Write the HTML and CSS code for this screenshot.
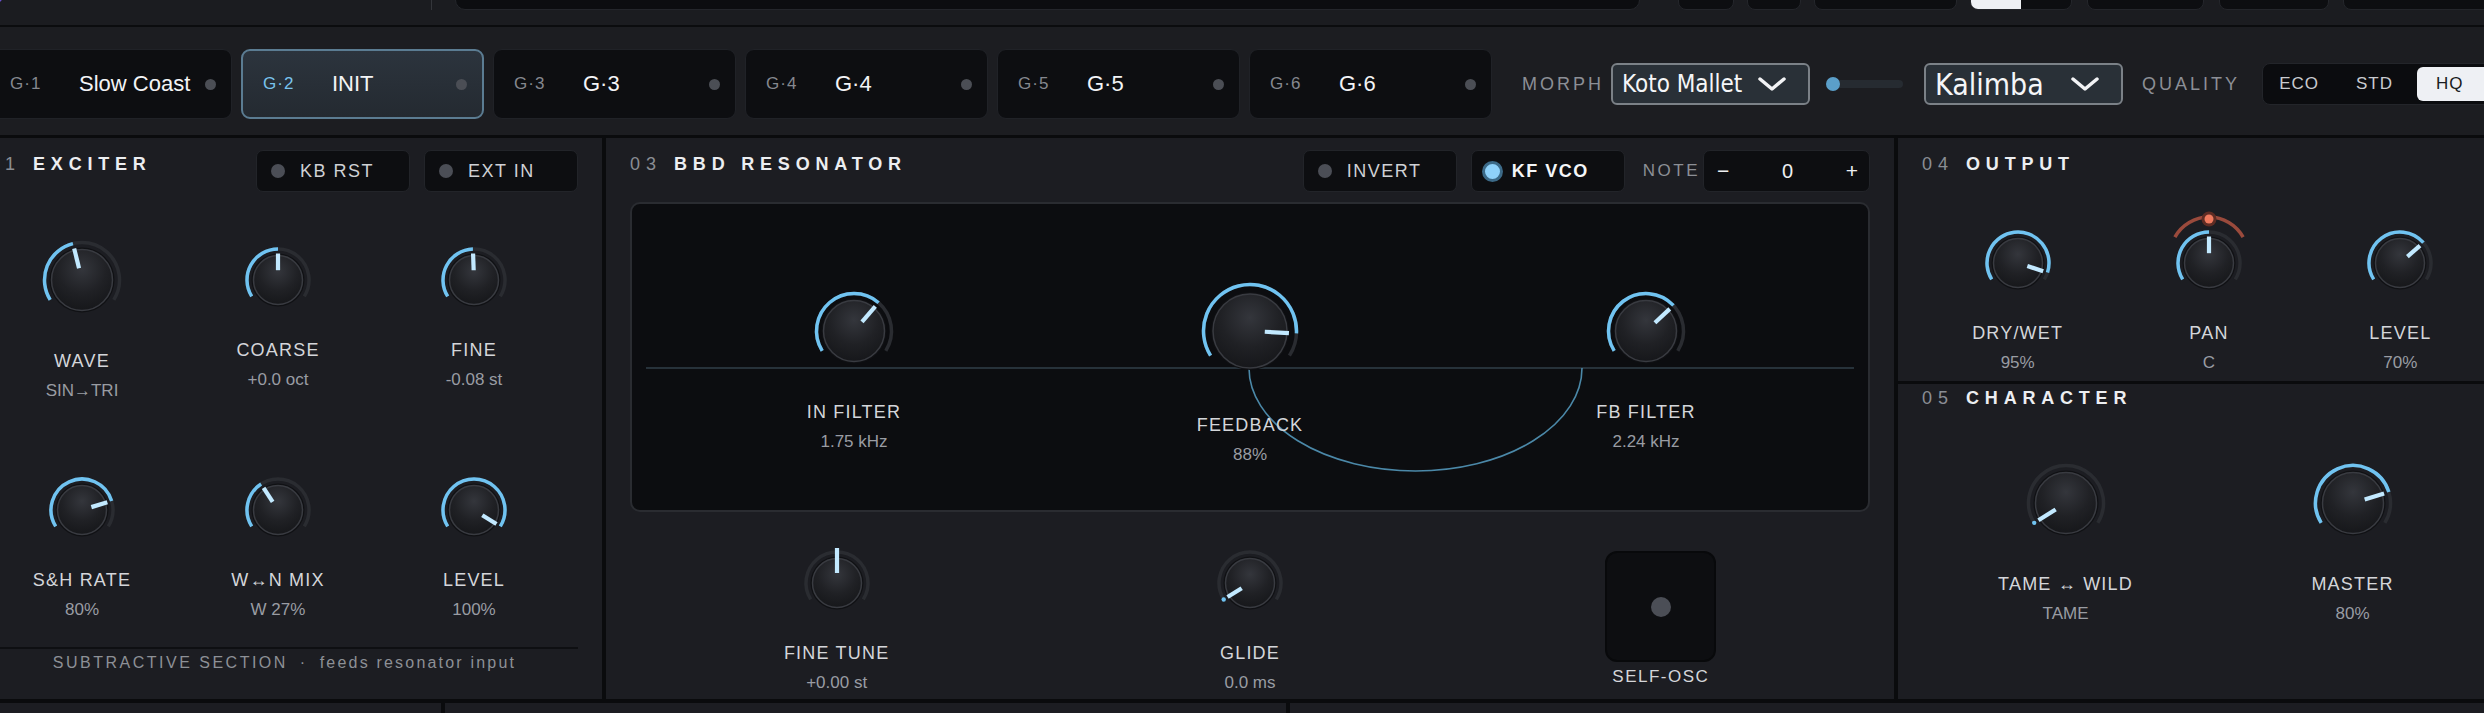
FILE: index.html
```html
<!DOCTYPE html>
<html lang="en">
<head>
<meta charset="utf-8">
<title>BBD Resonator Synth</title>
<link rel="stylesheet" href="styles.css">
</head>
<body>
<div class="app">
  <header class="topbar">
    <div class="tb-logo"></div>
    <div class="tb-sep"></div>
    <div class="tb-display"></div>
    <div class="tb-box w56 first"></div>
    <div class="tb-box w54"></div>
    <div class="tb-box w143"></div>
    <div class="tb-toggle"><span class="on"></span><span></span></div>
    <div class="tb-box w117"></div>
    <div class="tb-box w110"></div>
    <div class="tb-box w154"></div>
  </header>

  <section class="groups">
    <div class="tile"><span class="gid">G·1</span><span class="gname">Slow Coast</span><span class="gdot"></span></div>
    <div class="tile active"><span class="gid">G·2</span><span class="gname">INIT</span><span class="gdot"></span></div>
    <div class="tile"><span class="gid">G·3</span><span class="gname">G·3</span><span class="gdot"></span></div>
    <div class="tile"><span class="gid">G·4</span><span class="gname">G·4</span><span class="gdot"></span></div>
    <div class="tile"><span class="gid">G·5</span><span class="gname">G·5</span><span class="gdot"></span></div>
    <div class="tile"><span class="gid">G·6</span><span class="gname">G·6</span><span class="gdot"></span></div>
    <div class="morph">
      <span class="cap-lbl morph-lbl">MORPH</span>
      <div class="dd"><span class="dd-txt koto">Koto Mallet</span><svg class="chev" viewBox="0 0 28 14"><path d="M2 2 L14 12 L26 2"/></svg></div>
      <div class="slider"><span class="sl-dot"></span></div>
      <div class="dd"><span class="dd-txt kal">Kalimba</span><svg class="chev" viewBox="0 0 28 14"><path d="M2 2 L14 12 L26 2"/></svg></div>
      <span class="cap-lbl quality-lbl">QUALITY</span>
      <div class="seg"><span class="seg-b">ECO</span><span class="seg-b">STD</span><span class="seg-b on">HQ</span></div>
    </div>
  </section>

  <main class="panels">
    <section class="panel exciter">
      <div class="phead">
        <span class="pnum">01</span><span class="ptitle">EXCITER</span>
        <div class="pbtns">
          <div class="tbtn"><span class="led"></span>KB RST</div>
          <div class="tbtn"><span class="led"></span>EXT IN</div>
        </div>
      </div>
      <div class="kgrid3 exc-grid">
        <div class="cell"><svg class="knob md" data-a="-14"></svg><div class="klbl">WAVE</div><div class="kval">SIN→TRI</div></div>
        <div class="cell"><svg class="knob sm" data-a="0"></svg><div class="klbl">COARSE</div><div class="kval">+0.0 oct</div></div>
        <div class="cell"><svg class="knob sm" data-a="-2"></svg><div class="klbl">FINE</div><div class="kval">-0.08 st</div></div>
        <div class="cell"><svg class="knob sm" data-a="73"></svg><div class="klbl">S&amp;H RATE</div><div class="kval">80%</div></div>
        <div class="cell"><svg class="knob sm" data-a="-33"></svg><div class="klbl">W↔N MIX</div><div class="kval">W 27%</div></div>
        <div class="cell"><svg class="knob sm" data-a="122"></svg><div class="klbl">LEVEL</div><div class="kval">100%</div></div>
      </div>
      <div class="pfoot"><span>SUBTRACTIVE SECTION</span><span class="mid">·</span><span class="lc">feeds resonator input</span></div>
    </section>

    <section class="panel bbd">
      <div class="phead">
        <span class="pnum">03</span><span class="ptitle">BBD RESONATOR</span>
        <div class="pbtns">
          <div class="tbtn"><span class="led"></span>INVERT</div>
          <div class="tbtn active"><span class="led"></span>KF VCO</div>
          <span class="cap-lbl note-lbl">NOTE</span>
          <div class="stepper"><span>−</span><span class="st-val">0</span><span>+</span></div>
        </div>
      </div>
      <div class="screen">
        <svg class="wires" viewBox="0 0 1235 306" preserveAspectRatio="none">
          <line x1="14" y1="164" x2="1222" y2="164"/>
          <path d="M617 164 A166.5 103 0 0 0 950 164"/>
        </svg>
        <div class="cell"><svg class="knob md" data-a="41"></svg><div class="klbl">IN FILTER</div><div class="kval">1.75 kHz</div></div>
        <div class="cell"><svg class="knob lg" data-a="93"></svg><div class="klbl">FEEDBACK</div><div class="kval">88%</div></div>
        <div class="cell"><svg class="knob md" data-a="47"></svg><div class="klbl">FB FILTER</div><div class="kval">2.24 kHz</div></div>
      </div>
      <div class="kgrid3 bbd-low">
        <div class="cell"><svg class="knob sm" data-a="0" data-mode="center"></svg><div class="klbl">FINE TUNE</div><div class="kval">+0.00 st</div></div>
        <div class="cell"><svg class="knob sm" data-a="-122"></svg><div class="klbl">GLIDE</div><div class="kval">0.0 ms</div></div>
        <div class="cell"><div class="selfosc"><span class="so-dot"></span></div><div class="so-lbl">SELF-OSC</div></div>
      </div>
    </section>

    <div class="rightcol">
      <section class="panel output">
        <div class="phead"><span class="pnum">04</span><span class="ptitle">OUTPUT</span></div>
        <div class="kgrid3 out-grid">
          <div class="cell"><svg class="knob sm" data-a="108"></svg><div class="klbl">DRY/WET</div><div class="kval">95%</div></div>
          <div class="cell"><svg class="knob sm" data-a="0" data-pan="1"></svg><div class="klbl">PAN</div><div class="kval">C</div></div>
          <div class="cell"><svg class="knob sm" data-a="49"></svg><div class="klbl">LEVEL</div><div class="kval">70%</div></div>
        </div>
      </section>
      <section class="panel character">
        <div class="phead"><span class="pnum">05</span><span class="ptitle">CHARACTER</span></div>
        <div class="kgrid2 chr-grid">
          <div class="cell"><svg class="knob md" data-a="-122"></svg><div class="klbl">TAME ↔ WILD</div><div class="kval">TAME</div></div>
          <div class="cell"><svg class="knob md" data-a="73"></svg><div class="klbl">MASTER</div><div class="kval">80%</div></div>
        </div>
      </section>
    </div>
  </main>

  <div class="bottomrow"><div></div><div></div><div></div></div>
</div>
<script src="knobs.js"></script>
</body>
</html>
```

FILE: styles.css
```css
* { box-sizing: border-box; margin: 0; padding: 0; }
html, body { width: 2484px; height: 713px; overflow: hidden; background: #1b1c20; }
body { font-family: "Liberation Sans", Arial, sans-serif; color: #e6e8eb; }

.app { width: 2555px; margin-left: -35px; margin-top: -35px; background: #0a0b0d; display: flex; flex-direction: column; }

/* top bar (mostly scrolled out of view) */
.topbar { height: 62px; flex: none; background: #1b1c20; border-bottom: 2px solid #0b0c0e; display: flex; align-items: flex-end; padding: 0 24px 15px; }
.tb-logo { width: 14px; height: 14px; border-radius: 50%; background: #6a4fd0; margin-bottom: 7px; flex: none; }
.tb-sep { width: 1px; height: 40px; background: #34363b; margin-left: 428px; flex: none; }
.tb-display { width: 1185px; height: 40px; margin-left: 23px; background: #0c0d10; border: 1px solid #24262b; border-radius: 10px; flex: none; }
.tb-box { height: 40px; margin-left: 13px; background: #0d0e11; border: 1px solid #24262b; border-radius: 8px; flex: none; }
.tb-box.first { margin-left: 38px; }
.w56 { width: 56px; } .w54 { width: 54px; } .w143 { width: 143px; } .w117 { width: 117px; margin-left: 15px; } .w110 { width: 110px; margin-left: 15px; } .w154 { width: 154px; margin-left: 14px; }
.tb-toggle { width: 102px; height: 40px; margin-left: 13px; display: flex; border-radius: 8px; overflow: hidden; background: #0d0e11; border: 1px solid #24262b; flex: none; }
.tb-toggle span { flex: 1; }
.tb-toggle .on { background: #eef0f4; }

/* group row */
.groups { height: 111px; flex: none; background: #1c1d21; border-bottom: 3px solid #0a0b0d; display: flex; align-items: flex-start; gap: 9px; padding: 22px 24px 0; }
.tile { width: 243px; height: 70px; flex: none; display: flex; align-items: center; padding: 0 15px 0 20px; background: #0d0e11; border: 1.5px solid #202227; border-radius: 9px; }
.gid { width: 69px; flex: none; font-size: 17px; letter-spacing: 1px; color: #85888f; }
.gname { flex: 1; font-size: 22px; color: #f3f4f6; white-space: nowrap; }
.gdot { width: 11px; height: 11px; border-radius: 50%; background: #4b4e55; flex: none; }
.tile.active { background: linear-gradient(#2c343d, #242a31); border: 2px solid #5b7c92; }
.tile.active .gid { color: #79c3ee; }

.morph { height: 70px; display: flex; align-items: center; margin-left: 21px; }
.cap-lbl { font-size: 18px; letter-spacing: 3px; color: #8c8f96; white-space: nowrap; }
.morph-lbl { width: 89px; flex: none; }
.dd { width: 199px; height: 42px; display: flex; align-items: center; justify-content: space-between; padding: 0 22px 0 9px; background: #293037; border: 2px solid #7b8187; border-radius: 6px; flex: none; }
.dd-txt { color: #f5f6f8; white-space: nowrap; font-family: "Liberation Sans Narrow", "DejaVu Sans Condensed", "Liberation Sans", sans-serif; }
.dd-txt.koto { font-size: 24px; }
.dd-txt.kal { font-size: 30px; }
.chev { width: 28px; height: 14px; flex: none; fill: none; stroke: #f2f3f5; stroke-width: 3.5; stroke-linecap: round; stroke-linejoin: round; }
.slider { width: 77px; height: 8px; margin: 0 21px 0 16px; background: #262b31; border-radius: 4px; display: flex; align-items: center; flex: none; }
.sl-dot { width: 14px; height: 14px; border-radius: 50%; background: #5b9fc9; }
.quality-lbl { width: 139px; padding-left: 19px; flex: none; }
.seg { width: 234px; height: 42px; display: flex; padding: 3px; background: #0b0c0f; border: 1px solid #23252a; border-radius: 8px; flex: none; }
.seg-b { flex: 1; display: flex; align-items: center; justify-content: center; padding-right: 9px; font-size: 17px; letter-spacing: 1px; color: #c9cbcf; border-radius: 6px; }
.seg-b.on { background: #eef0f4; color: #1b1c20; }

/* panels */
.panels { height: 565px; flex: none; display: grid; grid-template-columns: 637px 1288px 622px; column-gap: 4px; border-bottom: 4px solid #0a0b0d; }
.panel { background: #1c1d22; display: flex; flex-direction: column; padding: 12px 24px 0; }
.rightcol { display: flex; flex-direction: column; gap: 3px; }
.phead { height: 42px; flex: none; display: flex; align-items: flex-start; }
.pnum { margin-top: 3px; font-size: 18px; line-height: 22px; letter-spacing: 6px; color: #8a8d94; }
.ptitle { margin-top: 3px; margin-left: 12px; font-size: 18px; line-height: 22px; font-weight: bold; letter-spacing: 5.8px; color: #eceef1; }
.pbtns { margin-left: auto; display: flex; align-items: center; gap: 14px; height: 42px; }
.tbtn { width: 154px; height: 42px; display: flex; align-items: center; gap: 15px; padding-left: 14px; background: #0d0e11; border: 1.5px solid #222429; border-radius: 7px; font-size: 18px; letter-spacing: 1.5px; color: #cfd1d5; }
.led { width: 14px; height: 14px; border-radius: 50%; background: #4b4e56; flex: none; }
.tbtn.active { color: #f4f6f8; font-weight: bold; gap: 9px; padding-left: 10px; }
.tbtn.active .led { width: 21px; height: 21px; background: #8fd2fb; border: 3px solid #3c6a88; }
.note-lbl { font-size: 17px; letter-spacing: 2.5px; margin-left: 4px; margin-right: -11px; }
.stepper { width: 167px; height: 42px; display: flex; align-items: center; justify-content: space-between; padding: 0 11px 0 13px; background: #0d0e11; border: 1.5px solid #222429; border-radius: 7px; font-size: 21px; color: #eef0f2; }
.st-val { font-size: 20px; }

/* knob cells */
.cell { display: flex; flex-direction: column; align-items: center; position: relative; }
.knob { display: block; overflow: visible; flex: none; }
.knob.sm { width: 76px; height: 76px; margin-top: 16px; }
.knob.md { width: 90px; height: 90px; margin-top: 9px; }
.knob.lg { width: 108px; height: 108px; }
.klbl { font-size: 18px; line-height: 22px; letter-spacing: 1.2px; color: #d4d6da; white-space: nowrap; }
.knob.sm + .klbl { margin-top: 21px; }
.knob.md + .klbl { margin-top: 25px; }
.knob.lg + .klbl { margin-top: 29px; }
.kval { margin-top: 8px; font-size: 17px; line-height: 22px; color: #999ca3; white-space: nowrap; }

.kgrid3 { display: grid; grid-template-columns: repeat(3, 1fr); align-items: start; }
.kgrid2 { display: grid; grid-template-columns: repeat(2, 1fr); align-items: start; }

.exc-grid { margin: 34px 6px 0 -5px; row-gap: 54px; }
.pfoot { margin-top: auto; margin-bottom: 25px; border-top: 2px solid #0e0f12; padding-top: 3px; display: flex; justify-content: center; font-size: 16px; line-height: 22px; letter-spacing: 2.5px; color: #8d9096; padding-left: 2px; }
.pfoot .mid { margin: 0 12px; }
.pfoot .lc { letter-spacing: 2.2px; }

.screen { margin-top: 10px; height: 310px; flex: none; position: relative; display: grid; grid-template-columns: repeat(3, 1fr); align-items: start; padding: 73px 24px 0; background: #0c0d10; border: 2px solid #2a2c31; border-radius: 10px; }
.wires { position: absolute; left: 0; top: 0; width: 1235px; height: 306px; fill: none; }
.wires line { stroke: #27323a; stroke-width: 2; }
.wires path { stroke: #4b88a8; stroke-width: 1.6; }
.bbd-low { margin-top: 17px; }
.selfosc { margin-top: 22px; margin-right: 5px; width: 111px; height: 111px; display: flex; align-items: center; justify-content: center; background: #0d0e11; border: 2px solid #08090b; border-radius: 12px; }
.so-dot { width: 20px; height: 20px; border-radius: 50%; background: #4b4e56; }
.so-lbl { margin-top: 4px; margin-right: 5px; font-size: 17px; line-height: 22px; letter-spacing: 1.5px; color: #d4d6da; }

.output { flex: none; height: 243px; }
.out-grid { margin-top: 17px; }
.character { flex: 1; padding-top: 0; }
.chr-grid { margin-top: 23px; }

.bottomrow { height: 40px; flex: none; display: grid; grid-template-columns: 476px 841px 1fr; column-gap: 4px; }
.bottomrow div { background: #1c1d22; }
```

FILE: knobs.js
```js
(function () {
  var NS = 'http://www.w3.org/2000/svg';
  var GEO = {
    sm: { h: 38, R: 31, rb: 24.5 },
    md: { h: 45, R: 37.5, rb: 30.5 },
    lg: { h: 54, R: 46.5, rb: 37 }
  };
  var A0 = -122;
  function pt(r, a) { var t = a * Math.PI / 180; return [r * Math.sin(t), -r * Math.cos(t)]; }
  function f(n) { return n.toFixed(2); }
  function arc(r, a1, a2) {
    var p1 = pt(r, a1), p2 = pt(r, a2);
    var large = (a2 - a1) > 180 ? 1 : 0;
    return 'M' + f(p1[0]) + ' ' + f(p1[1]) + ' A' + r + ' ' + r + ' 0 ' + large + ' 1 ' + f(p2[0]) + ' ' + f(p2[1]);
  }
  function el(name, attrs, parent) {
    var e = document.createElementNS(NS, name);
    for (var k in attrs) e.setAttribute(k, attrs[k]);
    parent.appendChild(e);
    return e;
  }
  var n = 0;
  var knobs = document.querySelectorAll('svg.knob');
  for (var i = 0; i < knobs.length; i++) {
    var svg = knobs[i];
    var size = svg.classList.contains('lg') ? 'lg' : (svg.classList.contains('md') ? 'md' : 'sm');
    var g = GEO[size];
    var a = parseFloat(svg.getAttribute('data-a'));
    var mode = svg.getAttribute('data-mode') || 'arc';
    svg.setAttribute('viewBox', (-g.h) + ' ' + (-g.h) + ' ' + (2 * g.h) + ' ' + (2 * g.h));
    var id = 'kg' + (n++);
    var defs = el('defs', {}, svg);
    var rg = el('radialGradient', { id: id, cx: '50%', cy: '32%', r: '72%' }, defs);
    el('stop', { offset: '0%', 'stop-color': '#34363c' }, rg);
    el('stop', { offset: '55%', 'stop-color': '#202125' }, rg);
    el('stop', { offset: '100%', 'stop-color': '#151619' }, rg);

    if (svg.hasAttribute('data-pan')) {
      el('path', { d: 'M-34.1 -25.9 A39 39 0 0 1 34.1 -25.9', fill: 'none', stroke: '#9a4a3c', 'stroke-width': 3.5 }, svg);
      el('circle', { cx: 0, cy: -44, r: 7.5, fill: '#5e2c24' }, svg);
      el('circle', { cx: 0, cy: -44, r: 4.5, fill: '#f07a5e' }, svg);
    }

    el('path', { d: arc(g.R, A0, -A0), fill: 'none', stroke: '#2a2c31', 'stroke-width': 3.5 }, svg);
    if (mode === 'arc') {
      if (a > A0 + 0.5) {
        el('path', { d: arc(g.R, A0, a), fill: 'none', stroke: '#70c3f1', 'stroke-width': 3.5 }, svg);
      } else {
        var ps = pt(g.R, A0);
        el('circle', { cx: f(ps[0]), cy: f(ps[1]), r: 2.2, fill: '#70c3f1' }, svg);
      }
    }
    el('circle', { cx: 0, cy: 0, r: g.rb + 2, fill: '#101114' }, svg);
    el('circle', { cx: 0, cy: 0, r: g.rb, fill: 'url(#' + id + ')', stroke: '#393b41', 'stroke-width': 1.5 }, svg);
    var r1 = g.rb * 0.4, r2 = g.rb + 2;
    if (mode === 'center') { r1 = 10; r2 = g.R + 4; }
    var p1 = pt(r1, a), p2 = pt(r2, a);
    el('line', { x1: f(p1[0]), y1: f(p1[1]), x2: f(p2[0]), y2: f(p2[1]), stroke: '#c2e9ff', 'stroke-width': 4.2 }, svg);
  }
})();
```
